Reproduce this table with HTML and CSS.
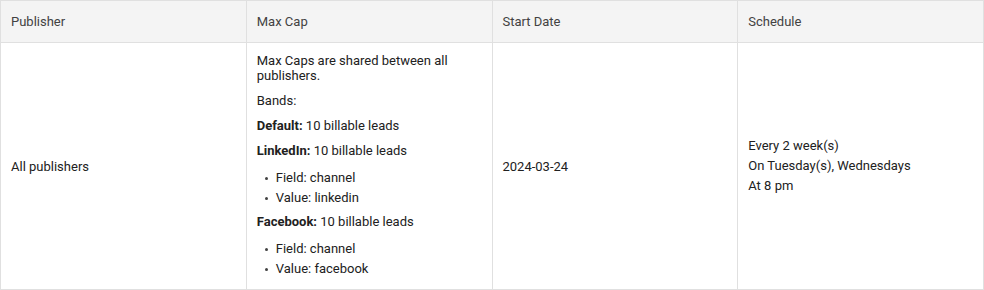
FILE: index.html
```html
<!DOCTYPE html>
<html lang="en">
<head>
    <meta charset="UTF-8">
    <title>Max Caps</title>
    <link rel="stylesheet" href="styles.css">
</head>
<body>
    <table class="caps-table">
        <thead>
            <tr>
                <th>Publisher</th>
                <th>Max Cap</th>
                <th>Start Date</th>
                <th>Schedule</th>
            </tr>
        </thead>
        <tbody>
            <tr>
                <td>All publishers</td>
                <td class="cap-cell">
                    <p>Max Caps are shared between all publishers.</p>
                    <p>Bands:</p>
                    <p><strong>Default:</strong> 10 billable leads</p>
                    <p><strong>LinkedIn:</strong> 10 billable leads</p>
                    <ul>
                        <li>Field: channel</li>
                        <li>Value: linkedin</li>
                    </ul>
                    <p><strong>Facebook:</strong> 10 billable leads</p>
                    <ul>
                        <li>Field: channel</li>
                        <li>Value: facebook</li>
                    </ul>
                </td>
                <td>2024-03-24</td>
                <td class="schedule">
                    <div>Every 2 week(s)</div>
                    <div>On Tuesday(s), Wednesdays</div>
                    <div>At 8 pm</div>
                </td>
            </tr>
        </tbody>
    </table>
</body>
</html>
```

FILE: styles.css
```css
* {
    margin: 0;
    padding: 0;
    box-sizing: border-box;
}

body {
    font-family: Roboto, 'Liberation Sans', sans-serif;
    font-size: 13px;
    color: #212121;
    background: white;
}

.caps-table {
    width: 100%;
    border-collapse: collapse;
    table-layout: fixed;
}

.caps-table th,
.caps-table td {
    border: 1px solid #e0e0e0;
    padding: 10px;
    text-align: left;
    vertical-align: middle;
}

.caps-table th {
    background: #f4f4f4;
    color: #424242;
    font-weight: normal;
    height: 42px;
    line-height: 15px;
}

.cap-cell p {
    line-height: 15px;
    margin-bottom: 10px;
}

.cap-cell strong {
    font-weight: 700;
}

.cap-cell ul {
    list-style: none;
    margin-bottom: 6px;
}

.cap-cell ul:last-child {
    margin-bottom: 0;
}

.cap-cell li {
    line-height: 20px;
}

.cap-cell li::before {
    content: "";
    display: inline-block;
    width: 3px;
    height: 3px;
    border-radius: 50%;
    background: #424242;
    margin: 0 8px 0 8px;
    vertical-align: middle;
}

.schedule div {
    line-height: 20px;
}
```
